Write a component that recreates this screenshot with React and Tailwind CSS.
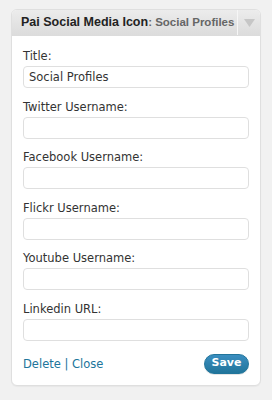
import React from 'react';

const fields = [
  { label: 'Title:', value: 'Social Profiles' },
  { label: 'Twitter Username:', value: '' },
  { label: 'Facebook Username:', value: '' },
  { label: 'Flickr Username:', value: '' },
  { label: 'Youtube Username:', value: '' },
  { label: 'Linkedin URL:', value: '' },
];

export default function App() {
  return (
    <div className="w-[272px] h-[400px] bg-[#f1f1f1] pt-[9px] px-[11px] font-['DejaVu_Sans',sans-serif]">
      <div className="w-[250px] bg-white border border-[#dfdfdf] rounded-[6px] overflow-hidden shadow-[0_1px_1px_rgba(0,0,0,0.04)]">
        {/* header */}
        <div className="flex h-[26px] bg-gradient-to-b from-[#ececec] to-[#dcdcdc] border-b border-[#dcdcdc]">
          <div className="flex-1 flex items-center pl-[9px] whitespace-nowrap overflow-hidden font-['Liberation_Sans',sans-serif]">
            <span className="text-[12.5px] font-bold text-[#222]">Pai Social Media Icon</span>
            <span className="text-[11.5px] font-bold text-[#666]">: Social Profiles</span>
          </div>
          <div className="w-[23px] border-l border-[#f6f6f6] flex items-center justify-center">
            <svg width="11" height="9" viewBox="0 0 11 9">
              <path d="M0 1 L11 1 L5.5 9 Z" fill="#c6c6c6" />
            </svg>
          </div>
        </div>

        {/* fields */}
        <div className="px-[11px] pt-[12px]">
          {fields.map((f) => (
            <div key={f.label} className="mb-[10.6px]">
              <label className="block text-[11.5px] leading-[16px] text-[#333]">{f.label}</label>
              <input
                type="text"
                defaultValue={f.value}
                className="mt-[2px] w-full h-[22px] px-[5px] text-[11.5px] text-[#333] bg-white border border-[#dfdfdf] rounded-[4px] outline-none font-['DejaVu_Sans',sans-serif]"
              />
            </div>
          ))}
          <div className="flex items-center justify-between pt-[2px] pb-[11px]">
            <div className="text-[11.5px] leading-[20px] text-[#21759b]">
              <a href="#">Delete</a> | <a href="#">Close</a>
            </div>
            <button className="w-[45px] h-[20px] rounded-full bg-gradient-to-b from-[#3a8ec0] to-[#21759b] border border-[#21759b] text-white text-[11px] font-bold shadow-[0_1px_0_rgba(0,0,0,0.1)]">
              Save
            </button>
          </div>
        </div>
      </div>
    </div>
  );
}
